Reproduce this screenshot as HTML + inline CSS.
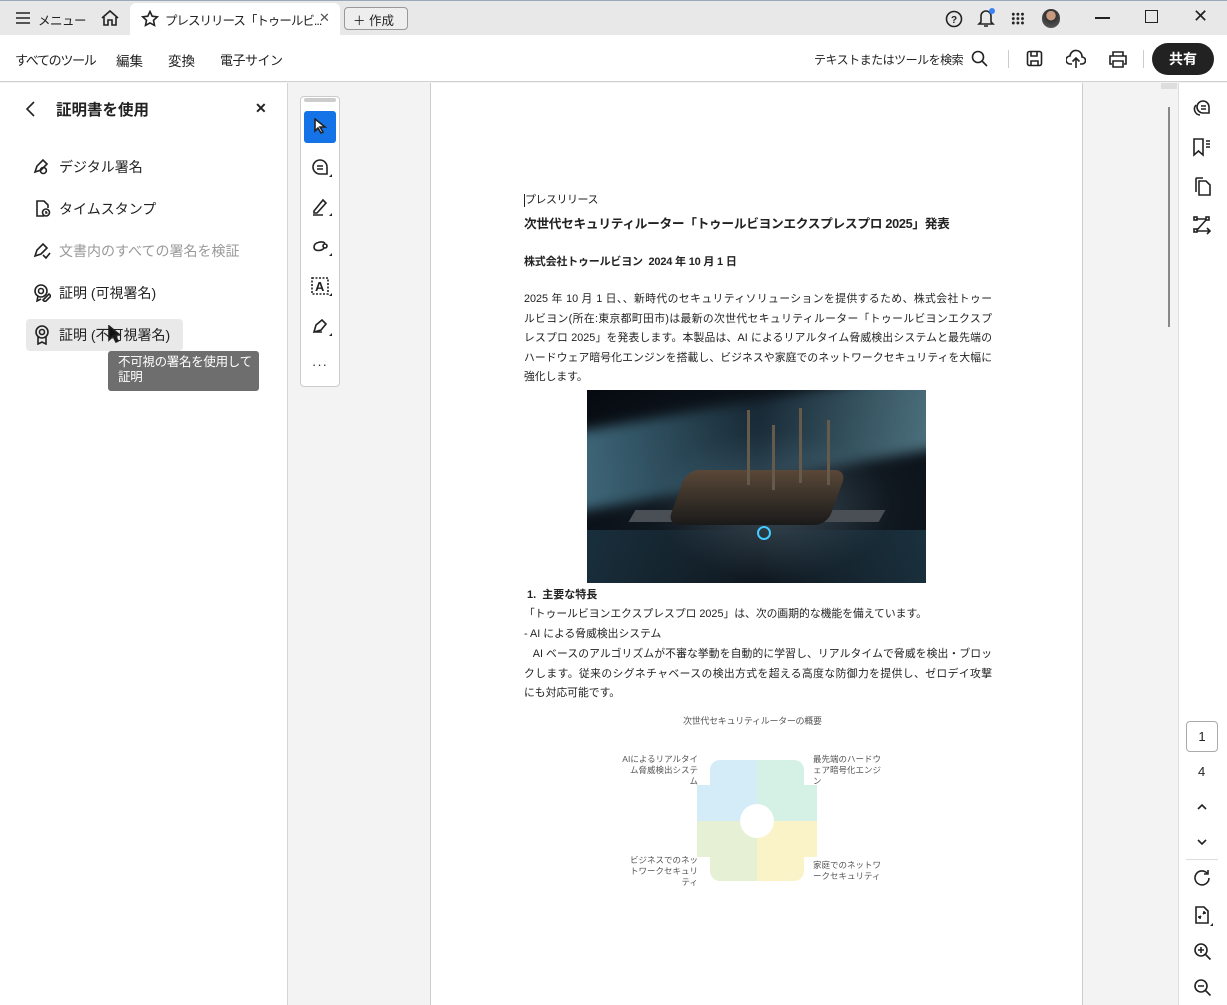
<!DOCTYPE html>
<html><head><meta charset="utf-8"><style>
*{box-sizing:border-box;margin:0;padding:0}
body{width:1227px;height:1005px;overflow:hidden;font-family:"Liberation Sans","Noto Sans CJK JP",sans-serif;color:#222;background:#f3f3f3;position:relative}
.abs{position:absolute;white-space:nowrap}
svg{position:absolute;fill:none;stroke:#222;stroke-width:1.6}
.ln{position:absolute;left:524px;width:468px;font-size:10.8px;white-space:nowrap;text-align:justify;text-align-last:justify;height:19px;line-height:19px;overflow:hidden}
.nl{text-align-last:left}
.lbl{position:absolute;font-size:8.5px;color:#555;line-height:11px;white-space:normal;width:76px}
</style></head><body>
<!-- title bar -->
<div class="abs" style="left:0;top:0;width:1227px;height:35px;background:#e8e8e8;border-top:1px solid #9aa9b8"></div>
<svg style="left:15px;top:11px" width="16" height="14"><path d="M1 2h14M1 7h14M1 12h14"/></svg>
<div class="abs" style="left:38px;top:10px;font-size:12.5px;letter-spacing:-0.5px">メニュー</div>
<svg style="left:100px;top:9px" width="20" height="18"><path d="M2 9L10 2l8 7M4 8v8h4v-5h4v5h4V8"/></svg>
<div class="abs" style="left:130px;top:3px;width:210px;height:32px;background:#fff;border-radius:6px 6px 0 0"></div>
<svg style="left:141px;top:10px" width="18" height="17" stroke-width="1.5"><path d="M9 1.5l2.2 4.7 5.1.6-3.8 3.5 1 5.1L9 12.9l-4.5 2.5 1-5.1L1.7 6.8l5.1-.6z"/></svg>
<div class="abs" style="left:165px;top:10px;font-size:12.5px;letter-spacing:-1px">プレスリリース「トゥールビ...</div>
<div class="abs" style="left:319px;top:10px;font-size:13px;color:#555">✕</div>
<div class="abs" style="left:344px;top:7px;width:64px;height:23px;border:1px solid #999;border-radius:4px;background:#eee;font-size:12.5px;padding:2px 0 0 8px">＋ 作成</div>
<svg style="left:945px;top:10px" width="18" height="18"><circle cx="9" cy="9" r="7.5"/><text x="6" y="13" font-size="10" font-weight="bold" fill="#222" stroke="none">?</text></svg>
<svg style="left:977px;top:8px" width="18" height="20"><path d="M4 14V8a5 5 0 0110 0v6l2 2H2zM7 18h4"/></svg>
<div class="abs" style="left:989px;top:8px;width:6px;height:6px;border-radius:3px;background:#3b82f6"></div>
<div class="abs" style="left:1011px;top:12px;width:14px;height:13px;background:radial-gradient(circle,#222 1.4px,transparent 1.6px) 0 0/4.6px 4.4px"></div>
<div class="abs" style="left:1042px;top:9px;width:18px;height:19px;border-radius:9px;background:radial-gradient(circle at 50% 35%,#c79a80 30%,#333 32%,#555 80%)"></div>
<div class="abs" style="left:1095px;top:17px;width:15px;height:2px;background:#222"></div>
<div class="abs" style="left:1145px;top:10px;width:13px;height:13px;border:1.5px solid #222"></div>
<div class="abs" style="left:1193px;top:6px;font-size:18px">✕</div>
<!-- toolbar -->
<div class="abs" style="left:0;top:35px;width:1227px;height:47px;background:#fff;border-bottom:1px solid #d0d0d0"></div>
<div class="abs" style="left:15px;top:50px;font-size:13px;letter-spacing:-1.3px">すべてのツール</div>
<div class="abs" style="left:116px;top:50px;font-size:13.5px">編集</div>
<div class="abs" style="left:168px;top:50px;font-size:13.5px">変換</div>
<div class="abs" style="left:220px;top:50px;font-size:13px;letter-spacing:-0.5px">電子サイン</div>
<div class="abs" style="left:814px;top:51px;font-size:12px;letter-spacing:-0.5px">テキストまたはツールを検索</div>
<svg style="left:971px;top:50px" width="18" height="18" stroke-width="2"><circle cx="7" cy="7" r="5.5"/><path d="M11 11l5 5"/></svg>
<div class="abs" style="left:1008px;top:50px;width:1px;height:18px;background:#ccc"></div>
<svg style="left:1026px;top:50px" width="17" height="17" stroke="#999"><rect x="1.5" y="1.5" width="14" height="14" rx="2"/><path d="M5 2v4h6V2M5 15v-4h7v4"/></svg>
<svg style="left:1066px;top:49px" width="20" height="20" stroke-width="2"><path d="M6 15H4a4 4 0 010-8 6 6 0 0112 1 3.5 3.5 0 010 7h-2M10 19V9M6.5 12.5L10 9l3.5 3.5"/></svg>
<svg style="left:1108px;top:50px" width="20" height="18" stroke-width="1.8"><path d="M5 6V2h10v4M4 14H2V6h16v8h-2M5 11h10v6H5z"/></svg>
<div class="abs" style="left:1143px;top:50px;width:1px;height:18px;background:#ccc"></div>
<div class="abs" style="left:1152px;top:43px;width:62px;height:32px;border-radius:16px;background:#222;color:#fff;font-size:14px;font-weight:bold;text-align:center;line-height:32px">共有</div>
<!-- left panel -->
<div class="abs" style="left:0;top:83px;width:288px;height:922px;background:#fff;border-right:1px solid #d4d4d4"></div>
<svg style="left:24px;top:100px" width="14" height="18" stroke-width="2"><path d="M10 2L3 9l7 7"/></svg>
<div class="abs" style="left:56px;top:98px;font-size:15.5px;font-weight:bold">証明書を使用</div>
<div class="abs" style="left:255px;top:100px;font-size:14px;font-weight:bold">✕</div>
<svg style="left:33px;top:157px" width="18" height="18" stroke-width="1.4"><path d="M2 15l2-6 6-6 4 4-6 6zM12 11a3 3 0 100 5 3 3 0 000-5"/></svg>
<div class="abs" style="left:59px;top:157px;font-size:14px">デジタル署名</div>
<svg style="left:35px;top:199px" width="17" height="19" stroke-width="1.4"><path d="M9 17H2V2h7l4 4v3M11 10a3.5 3.5 0 100 7 3.5 3.5 0 000-7M11 12v2h1.5"/></svg>
<div class="abs" style="left:59px;top:199px;font-size:14px">タイムスタンプ</div>
<svg style="left:33px;top:241px" width="18" height="18" stroke="#aaa" stroke-width="1.4"><path d="M2 15l2-6 6-6 4 4-6 6zM10 14l3 3 4-5"/></svg>
<div class="abs" style="left:59px;top:241px;font-size:14px;color:#999">文書内のすべての署名を検証</div>
<svg style="left:33px;top:283px" width="18" height="19" stroke-width="1.4"><circle cx="8" cy="8" r="6"/><circle cx="8" cy="8" r="2.5"/><path d="M5 13l-1 5 4-2M10 17l6-6 2 2-6 6z"/></svg>
<div class="abs" style="left:59px;top:283px;font-size:14px">証明 (可視署名)</div>
<div class="abs" style="left:26px;top:319px;width:157px;height:32px;background:#e9e9e9;border-radius:4px"></div>
<svg style="left:34px;top:325px" width="16" height="20" stroke-width="1.5"><circle cx="8" cy="7" r="6"/><circle cx="8" cy="7" r="2.5"/><path d="M4 12v7l4-2 4 2v-7"/></svg>
<div class="abs" style="left:59px;top:325px;font-size:14px">証明 (不可視署名)</div>
<svg style="left:108px;top:325px" width="12" height="18" stroke="#fff" stroke-width="1"><path d="M1 1v14l4-4 3 6 2-1-3-6h5z" fill="#111"/></svg>
<div class="abs" style="left:108px;top:351px;width:151px;height:40px;background:#6e6e6e;border-radius:3px;color:#fff;font-size:12.5px;line-height:15px;padding:4px 0 0 10px;letter-spacing:-0.3px">不可視の署名を使用して<br>証明</div>
<!-- vertical tool bar -->
<div class="abs" style="left:300px;top:96px;width:40px;height:291px;background:#fff;border:1px solid #ccc;border-radius:4px"></div>
<div class="abs" style="left:304px;top:98px;width:32px;height:4px;background:#ccc;border-radius:2px"></div>
<div class="abs" style="left:304px;top:111px;width:32px;height:32px;background:#1473e6;border-radius:3px"></div>
<svg style="left:313px;top:118px" width="16" height="18" stroke="#fff" stroke-width="1"><path d="M2 1v12l3-3 3 5 2-1-3-5h5z" fill="#fff"/></svg>
<svg style="left:311px;top:158px" width="22" height="22" stroke-width="1.6"><path d="M9 2a7 7 0 100 14h7V9a7 7 0 00-7-7zM6 8h6M6 11h6"/><path d="M18 19l3-3v3z" fill="#222" stroke="none"/></svg>
<svg style="left:311px;top:197px" width="22" height="22" stroke-width="1.6"><path d="M3 14L12 3l3 3-9 10H3zM2 18h10"/><path d="M18 19l3-3v3z" fill="#222" stroke="none"/></svg>
<svg style="left:311px;top:237px" width="22" height="22" stroke-width="1.6"><path d="M14 6c-3-2-11-1-11 4s8 4 10 1M12 9a2 2 0 104 0 2 2 0 00-4 0"/><path d="M18 19l3-3v3z" fill="#222" stroke="none"/></svg>
<svg style="left:310px;top:276px" width="23" height="23" stroke-width="1.6"><rect x="2" y="2" width="16" height="16" stroke-dasharray="2 1.5"/><text x="5" y="15" font-size="13" font-weight="bold" fill="#222" stroke="none">A</text><path d="M19 20l3-3v3z" fill="#222" stroke="none"/></svg>
<svg style="left:311px;top:317px" width="22" height="22" stroke-width="1.6"><path d="M3 15l2-7 6-5 4 4-5 6zM3 15h8"/><path d="M18 19l3-3v3z" fill="#222" stroke="none"/></svg>
<div class="abs" style="left:312px;top:357px;font-size:13px;letter-spacing:1px">···</div>
<!-- page -->
<div class="abs" style="left:430px;top:83px;width:653px;height:922px;background:#fff;border-left:1px solid #ccc;border-right:1px solid #ccc"></div>
<div class="abs" style="left:524px;top:194px;font-size:11px;border-left:1px solid #222;line-height:13px;letter-spacing:-0.5px">プレスリリース</div>
<div class="abs" style="left:524px;top:213px;font-size:12.7px;font-weight:bold;letter-spacing:-0.3px">次世代セキュリティルーター「トゥールビヨンエクスプレスプロ 2025」発表</div>
<div class="abs" style="left:524px;top:253px;font-size:11px;font-weight:bold;letter-spacing:-0.2px">株式会社トゥールビヨン&nbsp; 2024 年 10 月 1 日</div>
<div class="ln" style="top:290px">2025 年 10 月 1 日、、新時代のセキュリティソリューションを提供するため、株式会社トゥー</div>
<div class="ln" style="top:309.5px">ルビヨン(所在:東京都町田市)は最新の次世代セキュリティルーター「トゥールビヨンエクスプ</div>
<div class="ln" style="top:329px">レスプロ 2025」を発表します。本製品は、AI によるリアルタイム脅威検出システムと最先端の</div>
<div class="ln" style="top:348.5px">ハードウェア暗号化エンジンを搭載し、ビジネスや家庭でのネットワークセキュリティを大幅に</div>
<div class="ln nl" style="top:368px">強化します。</div>
<div class="abs" style="left:587px;top:390px;width:339px;height:193px;background:radial-gradient(ellipse at 55% 60%,#3a4a55 0%,#101820 45%,#060a10 100%);overflow:hidden">
 <div class="abs" style="left:-20px;top:10px;width:380px;height:80px;background:linear-gradient(90deg,rgba(120,200,230,.5),rgba(60,120,150,.2),rgba(150,220,240,.5));transform:skewY(-10deg);filter:blur(6px)"></div>
 <div class="abs" style="left:-10px;top:140px;width:360px;height:60px;background:linear-gradient(90deg,rgba(40,80,100,.5),transparent,rgba(40,80,100,.5))"></div>
 <div class="abs" style="left:45px;top:120px;width:250px;height:12px;background:#4a4f56;transform:skewX(-30deg)"></div>
 <div class="abs" style="left:90px;top:80px;width:160px;height:55px;background:linear-gradient(#5a4838,#1a1a1a);border-radius:12px;transform:skewX(-20deg)"></div>
 <div class="abs" style="left:170px;top:136px;width:14px;height:14px;border-radius:7px;border:2px solid #4cf"></div>
 <div class="abs" style="left:160px;top:20px;width:3px;height:75px;background:#665a4a"></div>
 <div class="abs" style="left:185px;top:35px;width:3px;height:65px;background:#665a4a"></div>
 <div class="abs" style="left:212px;top:18px;width:3px;height:75px;background:#665a4a"></div>
 <div class="abs" style="left:240px;top:30px;width:3px;height:65px;background:#665a4a"></div>
</div>
<div class="abs" style="left:527px;top:586px;font-size:11px;font-weight:bold;line-height:19px">1.&nbsp; 主要な特長</div>
<div class="ln nl" style="top:605px">「トゥールビヨンエクスプレスプロ 2025」は、次の画期的な機能を備えています。</div>
<div class="ln nl" style="top:625px">- AI による脅威検出システム</div>
<div class="ln" style="top:645px">&nbsp;&nbsp; AI ベースのアルゴリズムが不審な挙動を自動的に学習し、リアルタイムで脅威を検出・ブロッ</div>
<div class="ln" style="top:664.5px">クします。従来のシグネチャベースの検出方式を超える高度な防御力を提供し、ゼロデイ攻撃</div>
<div class="ln nl" style="top:684px">にも対応可能です。</div>
<div class="abs" style="left:683px;top:714px;font-size:9px;color:#555;letter-spacing:-0.3px">次世代セキュリティルーターの概要</div>
<div class="lbl" style="left:622px;top:754px;text-align:right">AIによるリアルタイム脅威検出システム</div>
<div class="lbl" style="left:813px;top:754px">最先端のハードウェア暗号化エンジン</div>
<div class="lbl" style="left:622px;top:855px;text-align:right">ビジネスでのネットワークセキュリティ</div>
<div class="lbl" style="left:813px;top:860px">家庭でのネットワークセキュリティ</div>
<div class="abs" style="left:710px;top:760px;width:47px;height:61px;background:#d4ecf8;border-radius:10px 0 0 0"></div>
<div class="abs" style="left:697px;top:785px;width:20px;height:36px;background:#d4ecf8"></div>
<div class="abs" style="left:757px;top:760px;width:47px;height:61px;background:#d5f0e4;border-radius:0 10px 0 0"></div>
<div class="abs" style="left:797px;top:785px;width:20px;height:36px;background:#d5f0e4"></div>
<div class="abs" style="left:710px;top:821px;width:47px;height:60px;background:#e6f0d4;border-radius:0 0 0 10px"></div>
<div class="abs" style="left:697px;top:821px;width:20px;height:36px;background:#e6f0d4"></div>
<div class="abs" style="left:757px;top:821px;width:47px;height:60px;background:#fbf3c8;border-radius:0 0 10px 0"></div>
<div class="abs" style="left:797px;top:821px;width:20px;height:36px;background:#fbf3c8"></div>
<div class="abs" style="left:740px;top:804px;width:34px;height:34px;border-radius:17px;background:#fff"></div>
<!-- right gray + scrollbar -->
<div class="abs" style="left:1162px;top:83px;width:16px;height:922px;background:#f3f3f3"></div>
<div class="abs" style="left:1161px;top:83px;width:16px;height:6px;background:#ddd"></div>
<div class="abs" style="left:1168px;top:107px;width:2px;height:220px;background:#888"></div>
<!-- right rail -->
<div class="abs" style="left:1178px;top:83px;width:49px;height:922px;background:#fff;border-left:1px solid #ddd"></div>
<svg style="left:1192px;top:99px" width="20" height="18" stroke-width="1.6"><path d="M11 2a6 6 0 100 12h6V8a6 6 0 00-6-6zM9 7h5M9 10h5M4 6a6 6 0 004 10"/></svg>
<svg style="left:1192px;top:137px" width="20" height="20" stroke-width="1.6"><path d="M2 2h9v16l-4.5-4L2 18zM14 4h4M14 7h4M14 10h4"/></svg>
<svg style="left:1192px;top:176px" width="20" height="20" stroke-width="1.6"><path d="M7 5h7l4 4v10H7zM4 16V3a1 1 0 011-1h6"/></svg>
<svg style="left:1192px;top:215px" width="20" height="20" stroke-width="1.6"><rect x="2" y="2" width="3" height="3"/><rect x="14" y="2" width="3" height="3"/><rect x="2" y="14" width="3" height="3"/><path d="M5 4h9M14 5L5 15M5 16h12M15 13l3 3-3 3"/></svg>
<div class="abs" style="left:1186px;top:721px;width:32px;height:31px;border:1px solid #aaa;border-radius:4px;text-align:center;line-height:30px;font-size:13px">1</div>
<div class="abs" style="left:1198px;top:764px;font-size:13px">4</div>
<svg style="left:1196px;top:802px" width="12" height="10" stroke="#aaa" stroke-width="1.8"><path d="M2 7l4-4 4 4"/></svg>
<svg style="left:1196px;top:837px" width="12" height="10" stroke-width="2"><path d="M2 3l4 4 4-4"/></svg>
<div class="abs" style="left:1186px;top:859px;width:32px;height:1px;background:#ddd"></div>
<svg style="left:1193px;top:869px" width="20" height="20" stroke-width="1.8"><path d="M16 9a7 7 0 11-2-5M15 1v4h-4"/></svg>
<svg style="left:1193px;top:905px" width="22" height="22" stroke-width="1.6"><path d="M3 2h8l4 4v12H3zM6 13l2-2M10 9l2-2M6 13v-2M6 13h2M12 7v2M12 7h-2"/><path d="M17 21l3-3v3z" fill="#222" stroke="none"/></svg>
<svg style="left:1193px;top:942px" width="20" height="20" stroke-width="1.8"><circle cx="8" cy="8" r="6"/><path d="M12.5 12.5l5 5M5 8h6M8 5v6"/></svg>
<svg style="left:1193px;top:978px" width="20" height="20" stroke-width="1.8"><circle cx="8" cy="8" r="6"/><path d="M12.5 12.5l5 5M5 8h6"/></svg>
</body></html>
